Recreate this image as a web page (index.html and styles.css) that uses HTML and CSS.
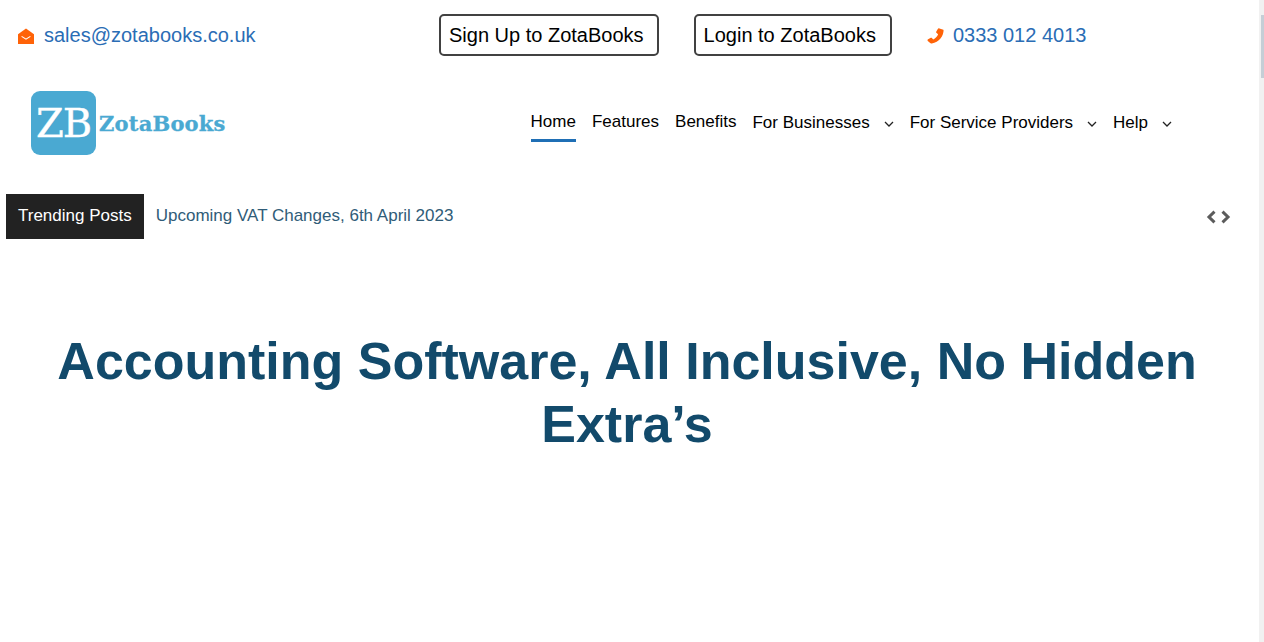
FILE: index.html
```html
<!DOCTYPE html>
<html lang="en">
<head>
<meta charset="utf-8">
<title>ZotaBooks</title>
<link rel="stylesheet" href="styles.css">
</head>
<body>
<div class="page">
  <div class="topbar">
    <a class="contact contact-mail" href="#">
      <svg class="contact-icon" viewBox="0 0 16 16" width="16" height="16"><path d="M0 6.2 8 .6l8 5.6V16H0z" fill="#ff6308"/><path d="M3.6 8.4 8 11.2l4.4-2.8" fill="none" stroke="#fff" stroke-width="1.1"/></svg>
      <span>sales@zotabooks.co.uk</span>
    </a>
    <a class="cta cta-signup" href="#">Sign Up to ZotaBooks</a>
    <a class="cta cta-login" href="#">Login to ZotaBooks</a>
    <a class="contact contact-phone" href="#">
      <svg class="contact-icon" viewBox="0 0 17 16" width="17" height="16"><path d="M16.6 1.2c.3 7-4.600 12.800-11.800 14.300-.8.200-1.400-.1-1.600-.4L.8 12.900c-.5-.7-.3-1.300.3-1.700l2.300-1.300c.7-.3 1.200-.2 1.700.3l1.100 1.300c2.300-1.100 4-3 4.900-5.300L9.700 5c-.6-.4-.7-1-.4-1.600L10.800.9c.3-.6.900-.8 1.600-.5l3.200 1c.6.200.9.400 1 .8z" fill="#ff6308"/></svg>
      <span>0333 012 4013</span>
    </a>
  </div>

  <header class="mainbar">
    <a class="logo" href="#">
      <span class="logo-mark">ZB</span>
      <span class="logo-word">ZotaBooks</span>
    </a>
    <nav class="nav">
      <a class="nav-item nav-active" href="#">Home</a>
      <a class="nav-item" href="#">Features</a>
      <a class="nav-item" href="#">Benefits</a>
      <a class="nav-item nav-drop" href="#">For Businesses<svg class="chev" viewBox="0 0 10 6" width="10" height="6"><path d="M1 1l4 4 4-4" fill="none" stroke="#222" stroke-width="1.300"/></svg></a>
      <a class="nav-item nav-drop" href="#">For Service Providers<svg class="chev" viewBox="0 0 10 6" width="10" height="6"><path d="M1 1l4 4 4-4" fill="none" stroke="#222" stroke-width="1.300"/></svg></a>
      <a class="nav-item nav-drop" href="#">Help<svg class="chev" viewBox="0 0 10 6" width="10" height="6"><path d="M1 1l4 4 4-4" fill="none" stroke="#222" stroke-width="1.300"/></svg></a>
    </nav>
  </header>

  <section class="ticker">
    <div class="ticker-label">Trending Posts</div>
    <a class="ticker-link" href="#">Upcoming VAT Changes, 6th April 2023</a>
    <div class="ticker-arrows">
      <svg viewBox="0 0 10 14" width="10" height="14"><path d="M8.500 1.700 3 7l5.500 5.300" fill="none" stroke="#5c5c5c" stroke-width="3"/></svg>
      <svg viewBox="0 0 10 14" width="10" height="14"><path d="M1.500 1.700 7 7l-5.500 5.300" fill="none" stroke="#5c5c5c" stroke-width="3"/></svg>
    </div>
  </section>

  <h1 class="headline">Accounting Software, All Inclusive, No Hidden Extra’s</h1>
</div>
<div class="scrollbar"><div class="scrollbar-thumb"></div></div>
</body>
</html>
```

FILE: styles.css
```css
* { box-sizing: border-box; }
html, body { margin: 0; height: 100%; overflow: hidden; background: #fff; }
body { font-family: "Liberation Sans", Arial, sans-serif; color: #000; }
a { text-decoration: none; color: inherit; }

.page { width: 1259px; }

.topbar { display: flex; align-items: center; height: 70px; padding-left: 18px; }
.contact { display: flex; align-items: center; font-size: 20px; color: #2a6db5; }
.contact-icon { margin-top: 2px; }
.contact-mail { gap: 10px; width: 421px; }
.contact-phone { gap: 9px; margin-left: 35px; }
.cta { display: block; height: 42px; line-height: 38px; padding: 0 13px 0 8px; border: 2px solid #414141; border-radius: 5px; font-size: 20px; color: #000; }
.cta-login { margin-left: 35px; padding-right: 14px; }

.mainbar { display: flex; align-items: flex-start; height: 124px; padding-left: 31px; }
.logo { display: flex; align-items: center; gap: 3px; margin-top: 21px; height: 64px; }
.logo-mark { display: flex; align-items: center; justify-content: center; width: 65px; height: 64px; background: #4aa9d2; border-radius: 9px; color: #fff; font-family: "DejaVu Serif", serif; font-size: 40px; letter-spacing: -1px; -webkit-text-stroke: .4px #fff; }
.logo-word { font-family: "DejaVu Serif", serif; font-weight: 700; font-size: 21px; letter-spacing: .2px; color: #4aa9d2; -webkit-text-stroke: .3px #4aa9d2; }

.nav { display: flex; align-items: flex-start; margin-left: 305px; padding-top: 30px; font-size: 17px; }
.nav-item { display: block; margin-right: 16px; height: 42px; line-height: 44px; color: #000; }
.nav-active { border-bottom: 3px solid #1f6fb5; }
.nav-drop { padding-top: 1px; }
.chev { margin-left: 14px; vertical-align: 1px; }

.ticker { display: flex; align-items: center; height: 45px; padding-left: 6px; }
.ticker-label { background: #222; color: #fff; height: 45px; line-height: 43px; padding: 0 12px; font-size: 17px; }
.ticker-link { margin-left: 12px; font-size: 17px; color: #305c78; position: relative; top: -1px; }
.ticker-arrows { display: flex; gap: 5px; margin-left: auto; margin-right: 28px; }

.headline { margin: 91px 0 0; padding-right: 5px; text-align: center; font-size: 52px; line-height: 63px; font-weight: 700; color: #124a6b; }

.scrollbar { position: absolute; top: 0; right: 0; bottom: 0; width: 5px; background: #f1f1f1; }
.scrollbar-thumb { width: 3px; height: 63px; margin: 15px 0 0 2px; background: #c5ced6; }
```
